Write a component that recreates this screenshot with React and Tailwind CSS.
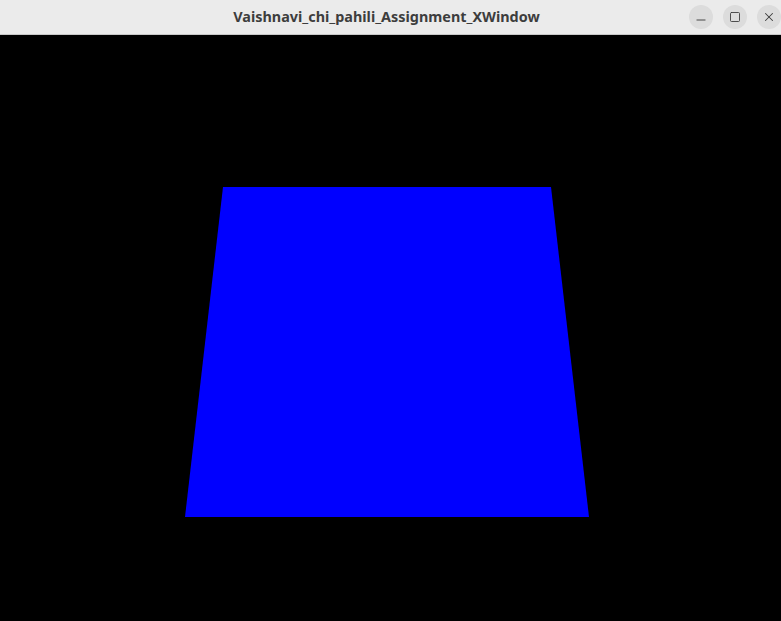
import { Minus, Square, X } from 'lucide-react';

function TitleButton({ children }) {
  return (
    <div className="w-6 h-6 rounded-full bg-[#dcdcdc] flex items-center justify-center text-[#3d3d3d]">
      {children}
    </div>
  );
}

export default function App() {
  return (
    <div className="w-[781px] h-[621px] flex flex-col bg-black overflow-hidden">
      <div className="h-[35px] shrink-0 bg-[#ebebeb] border-b border-[#c8c8c8] relative flex items-center justify-center">
        <span
          className="text-[14.4px] font-bold text-[#3d3d3d] pr-[8px]"
          style={{ fontFamily: '"Noto Sans", "DejaVu Sans", sans-serif' }}
        >
          Vaishnavi_chi_pahili_Assignment_XWindow
        </span>
        <div className="absolute right-[0px] top-[5px] flex gap-[10px]">
          <TitleButton>
            <Minus size={14} strokeWidth={1.6} className="translate-y-[3px]" />
          </TitleButton>
          <TitleButton>
            <Square size={12} strokeWidth={1.8} />
          </TitleButton>
          <TitleButton>
            <X size={14} strokeWidth={1.8} />
          </TitleButton>
        </div>
      </div>
      <div className="flex-1 bg-black">
        <svg width="781" height="586" viewBox="0 0 781 586">
          <polygon points="223,152 551,152 589,482 185,482" fill="#0000ff" />
        </svg>
      </div>
    </div>
  );
}
